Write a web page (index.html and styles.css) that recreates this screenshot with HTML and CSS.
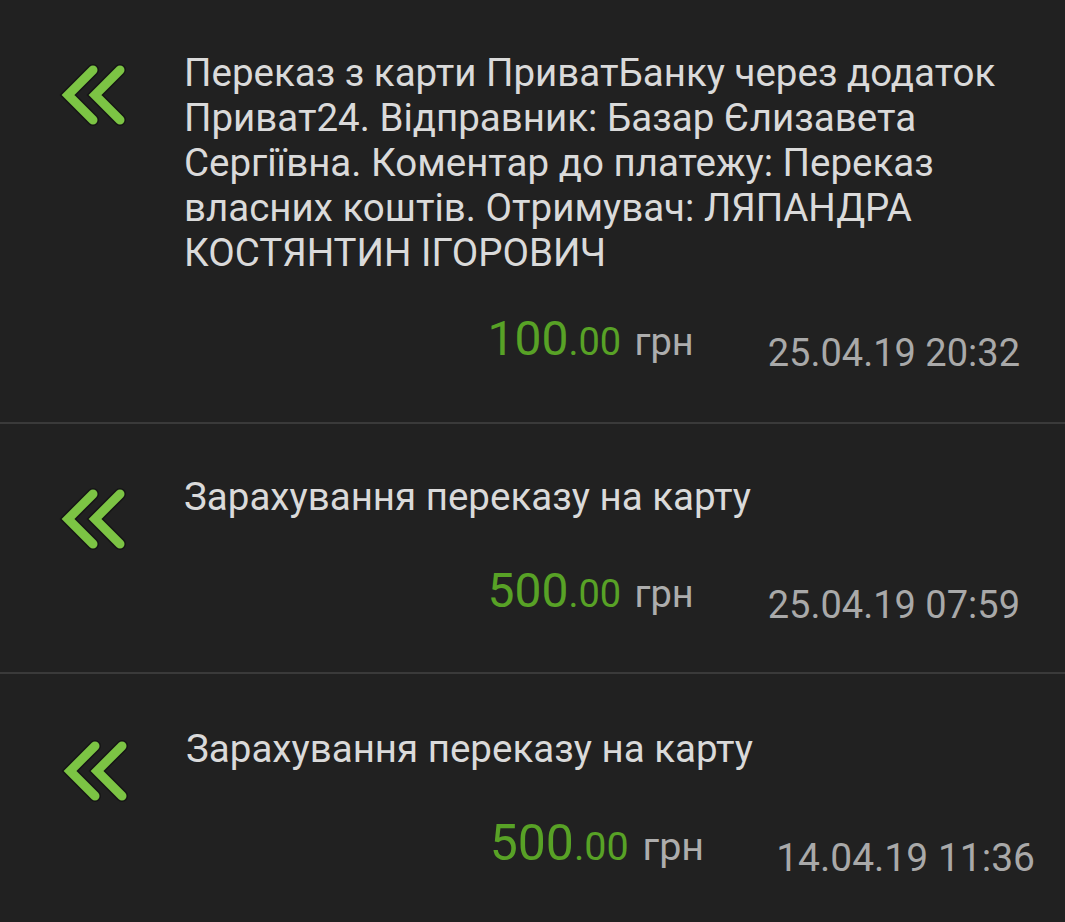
FILE: index.html
```html
<!DOCTYPE html>
<html lang="uk">
<head>
  <meta charset="UTF-8">
  <meta name="viewport" content="width=device-width, initial-scale=1.0">
  <title>Історія платежів</title>
  <link rel="stylesheet" href="styles.css">
</head>
<body>
  <div class="list">

    <div class="item item-first">
      <div class="icon">
        <svg width="70" height="62" viewBox="0 0 70 62">
          <polyline class="edge" points="37,6 12,31 37,56" />
          <polyline class="edge" points="64,6 39,31 64,56" />
          <polyline class="arrow" points="37,6 12,31 37,56" />
          <polyline class="arrow" points="64,6 39,31 64,56" />
        </svg>
      </div>
      <div class="info">
        <div class="title">Переказ з карти ПриватБанку через додаток Приват24. Відправник: Базар Єлизавета Сергіївна. Коментар до платежу: Переказ власних коштів. Отримувач: ЛЯПАНДРА КОСТЯНТИН ІГОРОВИЧ</div>
        <div class="bottom">
          <div class="sum"><span class="big">100</span><span class="cents">.00</span> <span class="cur">грн</span></div>
          <div class="date">25.04.19 20:32</div>
        </div>
      </div>
    </div>

    <div class="item">
      <div class="icon">
        <svg width="70" height="62" viewBox="0 0 70 62">
          <polyline class="edge" points="37,6 12,31 37,56" />
          <polyline class="edge" points="64,6 39,31 64,56" />
          <polyline class="arrow" points="37,6 12,31 37,56" />
          <polyline class="arrow" points="64,6 39,31 64,56" />
        </svg>
      </div>
      <div class="info">
        <div class="title">Зарахування переказу на карту</div>
        <div class="bottom">
          <div class="sum"><span class="big">500</span><span class="cents">.00</span> <span class="cur">грн</span></div>
          <div class="date">25.04.19 07:59</div>
        </div>
      </div>
    </div>

    <div class="item item-last">
      <div class="icon">
        <svg width="70" height="62" viewBox="0 0 70 62">
          <polyline class="edge" points="37,6 12,31 37,56" />
          <polyline class="edge" points="64,6 39,31 64,56" />
          <polyline class="arrow" points="37,6 12,31 37,56" />
          <polyline class="arrow" points="64,6 39,31 64,56" />
        </svg>
      </div>
      <div class="info">
        <div class="title">Зарахування переказу на карту</div>
        <div class="bottom">
          <div class="sum"><span class="big">500</span><span class="cents">.00</span> <span class="cur">грн</span></div>
          <div class="date">14.04.19 11:36</div>
        </div>
      </div>
    </div>

  </div>
</body>
</html>
```

FILE: styles.css
```css
body {
  margin: 0;
  background: #212121;
  font-family: Roboto, "Liberation Sans", sans-serif;
}

.list {
  width: 1065px;
  height: 922px;
  overflow: hidden;
}

.item {
  display: flex;
  height: 250px;
  box-sizing: border-box;
  padding: 50px 45px 0 56px;
  border-bottom: 2px solid #3a3a3a;
}

.item-first {
  height: 424px;
}

.item-first .bottom {
  margin-top: 35px;
}

.item-last {
  border-bottom: none;
  padding: 52px 30px 0 58px;
}

.item-last .bottom {
  margin-top: 43px;
}

.item-last .sum {
  font-size: 39.5px;
}

.item-last .sum .big {
  font-size: 50px;
}

.item-last .date {
  font-size: 39px;
  margin-left: 72px;
}

.icon {
  width: 128px;
  flex-shrink: 0;
  padding-top: 14px;
}

.icon svg {
  display: block;
}

.icon .edge {
  fill: none;
  stroke: #151515;
  stroke-width: 12;
  stroke-linecap: round;
}

.icon .arrow {
  fill: none;
  stroke: #7cc444;
  stroke-width: 9;
  stroke-linecap: round;
}

.info {
  flex: 1;
}

.title {
  color: #dadada;
  font-size: 38.5px;
  line-height: 45px;
}

.bottom {
  display: flex;
  justify-content: flex-end;
  align-items: baseline;
  margin-top: 43px;
}

.sum {
  color: #58a226;
  font-size: 38px;
}

.sum .big {
  font-size: 48px;
}

.sum .cur {
  color: #adadad;
  margin-left: 4px;
}

.date {
  color: #a9a9a9;
  font-size: 38px;
  margin-left: 74px;
  position: relative;
  top: 11px;
}
```
